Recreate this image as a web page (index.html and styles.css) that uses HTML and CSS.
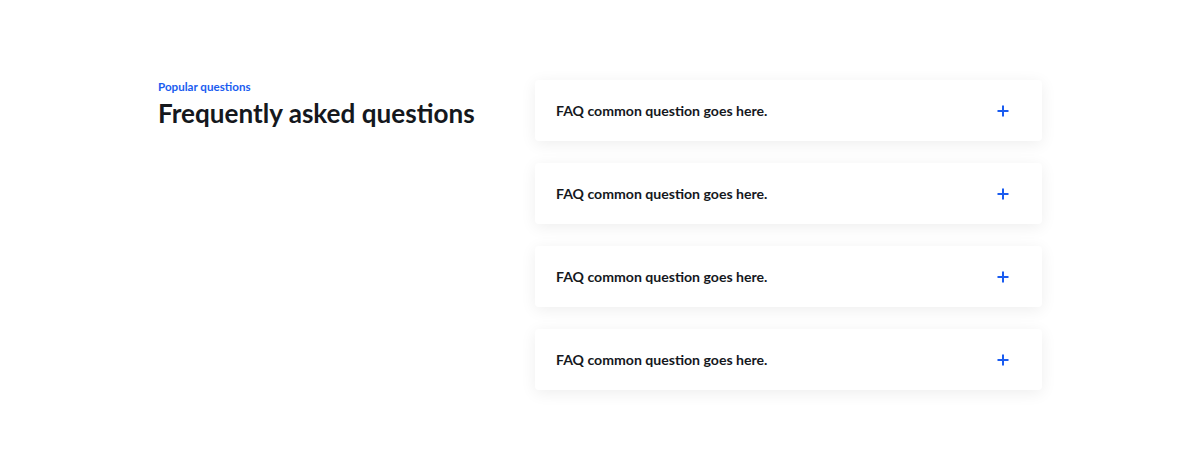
FILE: index.html
```html
<!DOCTYPE html>
<html lang="en">
<head>
<meta charset="utf-8">
<title>FAQ</title>
<link rel="stylesheet" href="styles.css">
</head>
<body>
<section class="faq">
  <div class="faq-intro">
    <p class="eyebrow">Popular questions</p>
    <h1 class="title">Frequently asked questions</h1>
  </div>
  <div class="faq-list">
    <div class="faq-item">
      <span class="question">FAQ common question goes here.</span>
      <svg class="plus" width="12" height="12" viewBox="0 0 12 12"><path d="M6 0.5v11M0.5 6h11" stroke="#1a5cf0" stroke-width="2" fill="none"/></svg>
    </div>
    <div class="faq-item">
      <span class="question">FAQ common question goes here.</span>
      <svg class="plus" width="12" height="12" viewBox="0 0 12 12"><path d="M6 0.5v11M0.5 6h11" stroke="#1a5cf0" stroke-width="2" fill="none"/></svg>
    </div>
    <div class="faq-item">
      <span class="question">FAQ common question goes here.</span>
      <svg class="plus" width="12" height="12" viewBox="0 0 12 12"><path d="M6 0.5v11M0.5 6h11" stroke="#1a5cf0" stroke-width="2" fill="none"/></svg>
    </div>
    <div class="faq-item">
      <span class="question">FAQ common question goes here.</span>
      <svg class="plus" width="12" height="12" viewBox="0 0 12 12"><path d="M6 0.5v11M0.5 6h11" stroke="#1a5cf0" stroke-width="2" fill="none"/></svg>
    </div>
  </div>
</section>
</body>
</html>
```
FILE: styles.css
```css
html, body {
  margin: 0;
  padding: 0;
  background: #ffffff;
}
body {
  font-family: Lato, "Open Sans", sans-serif;
  color: #15181d;
}
.faq {
  width: 884px;
  margin: 0 auto;
  padding: 80px 0 60px;
  display: grid;
  grid-template-columns: 377px 507px;
}
.eyebrow {
  margin: 0;
  font-size: 11.6px;
  line-height: 14px;
  font-weight: 700;
  color: #1a5cf0;
}
.title {
  margin: 2px 0 0;
  font-size: 26.1px;
  line-height: 34px;
  font-weight: 700;
  color: #15181d;
}
.faq-list {
  display: flex;
  flex-direction: column;
  gap: 22px;
}
.faq-item {
  height: 61px;
  box-sizing: border-box;
  padding: 0 33px 0 21px;
  display: flex;
  align-items: center;
  justify-content: space-between;
  background: #fff;
  border-radius: 4px;
  box-shadow: 0 3px 16px rgba(0, 0, 0, 0.07);
}
.question {
  font-size: 14.1px;
  font-weight: 700;
  color: #15181d;
}
.plus {
  display: block;
}
```
